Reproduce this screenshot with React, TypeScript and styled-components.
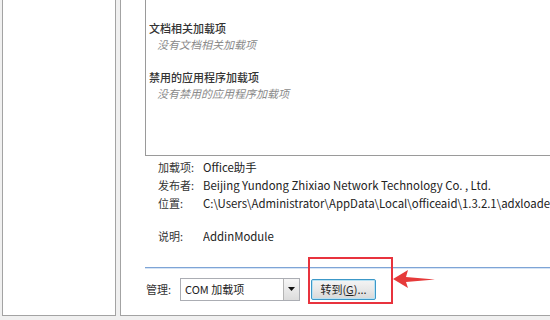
import React from "react";
import styled, { createGlobalStyle } from "styled-components";

const Global = createGlobalStyle`
  html, body { margin: 0; padding: 0; background: #f0f0f0; }
  body { font-family: "Noto Sans CJK SC", "Noto Sans", sans-serif; font-size: 11px; color: #333; }
`;

const Root = styled.div`
  width: 550px;
  height: 320px;
  overflow: hidden;
  display: flex;
  align-items: flex-start;
  background: #f0f0f0;
`;

const LeftPanel = styled.div`
  margin-left: 2px;
  width: 112px;
  height: 315px;
  background: #fff;
  border: 1px solid #a3a3a3;
  border-top: none;
  flex-shrink: 0;
`;

const RightPanel = styled.div`
  margin-left: 4px;
  flex: 1;
  min-width: 0;
  height: 315px;
  background: #fff;
  border-left: 1px solid #a3a3a3;
  border-bottom: 1px solid #a3a3a3;
  display: flex;
  flex-direction: column;
  padding-left: 24px;
`;

const ListBox = styled.div`
  height: 156px;
  box-sizing: border-box;
  border-left: 1px solid #9a9a9a;
  border-bottom: 1px solid #9a9a9a;
  display: flex;
  flex-direction: column;
  padding: 20px 0 0 3px;
  gap: 16px;
`;

const Group = styled.div`
  display: flex;
  flex-direction: column;
`;

const Heading = styled.div`
  line-height: 16px;
  color: #333;
  font-weight: 500;
`;

const Item = styled.div`
  line-height: 17px;
  padding-left: 8px;
  color: #8a8a8a;
  font-style: italic;
`;

const Details = styled.div`
  margin-top: 2px;
  padding-left: 13px;
  display: grid;
  grid-template-columns: 45px auto;
  grid-template-rows: 18px 18px 18px 15px 18px;
  align-items: center;
  white-space: nowrap;
`;

const Spacer = styled.div`
  grid-column: 1 / span 2;
`;

const Label = styled.div`
  color: #333;
`;

const Value = styled.div`
  color: #222;
  font-size: 11.4px;
  overflow: hidden;
`;

const Separator = styled.div`
  margin-top: 22px;
  height: 1px;
  background: #7ea4d6;
  border-bottom: 1px solid #d6e4f5;
`;

const Bottom = styled.div`
  margin-top: 8px;
  display: flex;
  align-items: center;
  height: 24px;
`;

const ManageLabel = styled.div`
  width: 34px;
  padding-left: 1px;
`;

const Select = styled.div`
  width: 118px;
  height: 21px;
  border: 1px solid #abadb3;
  display: flex;
  align-items: stretch;
  background: #fff;
`;

const SelectText = styled.div`
  flex: 1;
  padding-left: 4px;
  display: flex;
  align-items: center;
  color: #222;
`;

const DropButton = styled.div`
  width: 15px;
  border-left: 1px solid #b5b5b5;
  background: linear-gradient(#f6f6f6, #dcdcdc);
  display: flex;
  align-items: center;
  justify-content: center;
`;

const ButtonWrap = styled.div`
  position: relative;
  margin-left: 11px;
`;

const GoButton = styled.div`
  width: 63px;
  height: 19px;
  border: 1px solid #3c98c8;
  border-radius: 2px;
  background: linear-gradient(#f4f4f4 0%, #e8e8e8 50%, #d8d8d8 100%);
  box-shadow: inset 0 0 0 1px #b8e2f4;
  display: flex;
  align-items: center;
  justify-content: center;
  color: #222;
  u { text-decoration: underline; }
`;

const Highlight = styled.div`
  position: absolute;
  left: -3px;
  top: -22px;
  width: 81px;
  height: 43px;
  border: 2px solid #e8333d;
  pointer-events: none;
`;

const Arrow = styled.svg`
  position: absolute;
  left: 82px;
  top: -10px;
`;

export default function App() {
  return (
    <Root>
      <Global />
      <LeftPanel />
      <RightPanel>
        <ListBox>
          <Group>
            <Heading>文档相关加载项</Heading>
            <Item>没有文档相关加载项</Item>
          </Group>
          <Group>
            <Heading>禁用的应用程序加载项</Heading>
            <Item>没有禁用的应用程序加载项</Item>
          </Group>
        </ListBox>
        <Details>
          <Label>加载项:</Label>
          <Value>Office助手</Value>
          <Label>发布者:</Label>
          <Value>Beijing Yundong Zhixiao Network Technology Co. , Ltd.</Value>
          <Label>位置:</Label>
          <Value>C:\Users\Administrator\AppData\Local\officeaid\1.3.2.1\adxloader</Value>
          <Spacer />
          <Label>说明:</Label>
          <Value>AddinModule</Value>
        </Details>
        <Separator />
        <Bottom>
          <ManageLabel>管理:</ManageLabel>
          <Select>
            <SelectText>COM 加载项</SelectText>
            <DropButton>
              <svg width="7" height="4" viewBox="0 0 7 4">
                <path d="M0 0 H7 L3.5 4 Z" fill="#111" />
              </svg>
            </DropButton>
          </Select>
          <ButtonWrap>
            <GoButton>
              转到(<u>G</u>)...
            </GoButton>
            <Highlight />
            <Arrow width="44" height="20" viewBox="0 0 44 20">
              <path d="M0 10 L15 1 L13 8 L42 10.5 L13 13 L15 19 Z" fill="#e63a3a" />
            </Arrow>
          </ButtonWrap>
        </Bottom>
      </RightPanel>
    </Root>
  );
}
